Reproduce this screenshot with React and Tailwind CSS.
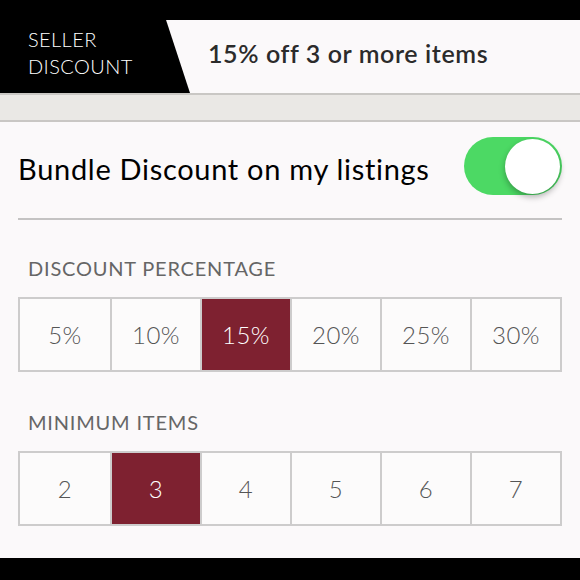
import React, { useState } from "react";

const percents = ["5%", "10%", "15%", "20%", "25%", "30%"];
const counts = ["2", "3", "4", "5", "6", "7"];

function Toggle({ on }) {
  return (
    <div
      className={`w-[98px] h-[58px] rounded-full p-[2px] flex items-center ${
        on ? "bg-[#4cd964] justify-end" : "bg-[#e5e5e5] justify-start"
      }`}
    >
      <div className="w-[55px] h-[55px] rounded-full bg-white shadow-[0_3px_6px_rgba(0,0,0,0.3)]" />
    </div>
  );
}

function OptionGrid({ options, selected, onSelect }) {
  return (
    <div className="grid grid-cols-6 border-2 border-[#cdcccc] bg-white">
      {options.map((opt, i) => (
        <button
          key={opt}
          onClick={() => onSelect(opt)}
          className={`h-[71px] flex items-center justify-center text-[24px] font-light tracking-[0.5px] ${
            i > 0 ? "border-l-2 border-[#cdcccc]" : ""
          } ${
            opt === selected
              ? "bg-[#7e2130] text-white"
              : "bg-[#fcfbfb] text-[#555]"
          }`}
        >
          {opt}
        </button>
      ))}
    </div>
  );
}

export default function App() {
  const [percent, setPercent] = useState("15%");
  const [count, setCount] = useState("3");

  return (
    <div
      className="w-[580px] h-[580px] bg-black flex flex-col overflow-hidden"
      style={{ fontFamily: "Lato, 'Open Sans', sans-serif" }}
    >
      <div className="h-[20px] shrink-0" />

      {/* header */}
      <div className="h-[73px] shrink-0 flex bg-[#fbf9fa]">
        <div className="w-[190px] bg-black text-white [clip-path:polygon(0_0,87.4%_0,100%_100%,0_100%)] pl-[28px] pt-[6px] text-[20px] leading-[27px] font-light tracking-[0.4px]">
          SELLER
          <br />
          DISCOUNT
        </div>
        <div className="flex items-center pl-[18px] text-[25px] font-semibold text-[#2b2b2b] pb-[6px] tracking-[0.6px]">
          {percent} off {count} or more items
        </div>
      </div>

      {/* textured band */}
      <div className="h-[29px] shrink-0 bg-[#eae8e5] border-y-2 border-[#c9c7c4]" />

      {/* body */}
      <div className="flex-1 bg-[#fbf9fa] px-[18px]">
        <div className="h-[96px] flex items-center justify-between">
          <span className="text-[29px] text-black pb-[2px] tracking-[0.7px]">
            Bundle Discount on my listings
          </span>
          <div className="pb-[8px]">
            <Toggle on />
          </div>
        </div>
        <div className="h-[2px] bg-[#c4c3c3]" />

        <div className="pt-[37px] pb-[18px] pl-[10px] leading-[22px] text-[20px] text-[#666] tracking-[0.8px]">
          DISCOUNT PERCENTAGE
        </div>
        <OptionGrid options={percents} selected={percent} onSelect={setPercent} />

        <div className="pt-[39px] pb-[18px] pl-[10px] leading-[22px] text-[20px] text-[#666] tracking-[0.8px]">
          MINIMUM ITEMS
        </div>
        <OptionGrid options={counts} selected={count} onSelect={setCount} />
      </div>

      <div className="h-[22px] shrink-0" />
    </div>
  );
}
